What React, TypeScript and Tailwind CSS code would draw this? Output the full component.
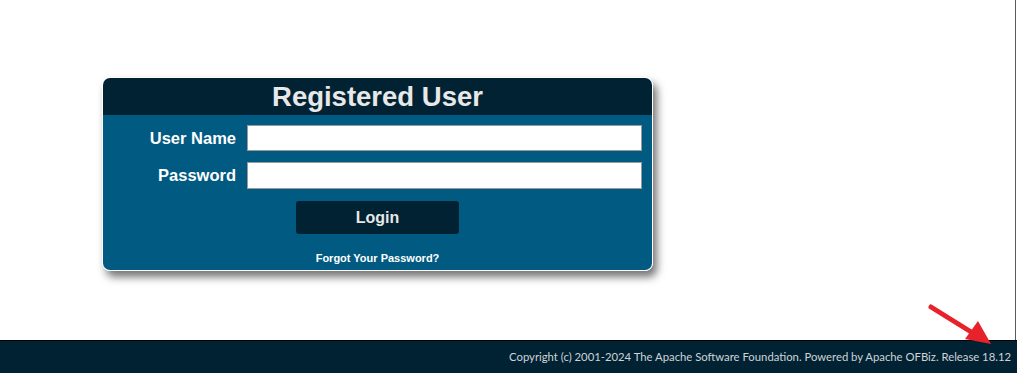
export default function App() {
  return (
    <div className="relative flex h-screen flex-col bg-white font-['Liberation_Sans',Arial,sans-serif]">
      <div className="flex flex-1 border-r border-r-[#5a5a5a] mr-[1px]">
        <div className="pl-[102px] pt-[77px]">
          <div className="w-[551px] overflow-hidden rounded-[8px] border border-white shadow-[4px_6px_9px_rgba(0,0,0,0.55)]">
            <div className="flex h-[37px] items-center justify-center bg-[#012233]">
              <h1 className="text-[27.5px] font-bold leading-none text-[#e8e8e8]">Registered User</h1>
            </div>
            <div className="bg-[#005a82] pt-[10px] pb-[6px]">
              <div className="grid grid-cols-[133px_395px] items-center gap-x-[11px] gap-y-[11px]">
                <label className="text-right text-[16.5px] font-bold text-white">User Name</label>
                <input type="text" className="h-[26px] border border-[#9a9a9a] bg-white outline-none" />
                <label className="text-right text-[16.5px] font-bold text-white">Password</label>
                <input type="password" className="h-[27px] border border-[#9a9a9a] bg-white outline-none" />
              </div>
              <div className="mt-[12px] flex justify-center">
                <button className="h-[33px] w-[163px] rounded-[3px] bg-[#012233] text-[16px] font-bold text-[#e8e8e8]">Login</button>
              </div>
              <div className="mt-[19px] text-center text-[11px] font-bold leading-none text-white">Forgot Your Password?</div>
            </div>
          </div>
        </div>
      </div>
      <footer className="flex h-[33px] items-center justify-end border-t border-t-black bg-[#012233] pr-[6px] font-['Lato',sans-serif] text-[11.3px] text-[#cfd3d6]">
        Copyright (c) 2001-2024 The Apache Software Foundation. Powered by Apache OFBiz. Release 18.12
      </footer>
      <svg className="pointer-events-none absolute left-[920px] top-[300px]" width="80" height="50" viewBox="0 0 80 50">
        <line x1="11" y1="7" x2="56" y2="35" stroke="#e8222a" strokeWidth="5" strokeLinecap="round" />
        <polygon points="71,44 45,39 58,21" fill="#e8222a" />
      </svg>
    </div>
  )
}
